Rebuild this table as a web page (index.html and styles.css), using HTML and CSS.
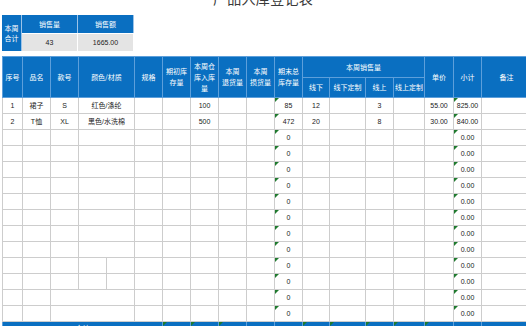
FILE: index.html
```html
<!DOCTYPE html>
<html lang="zh">
<head>
<meta charset="utf-8">
<title>产品入库登记表</title>
<link rel="stylesheet" href="styles.css">
</head>
<body>
<div class="page">
  <div class="title">产品入库登记表</div>
  <div class="summary">
    <div class="s-label">本周<br>合计</div>
    <div class="s-head">销售量</div>
    <div class="s-head">销售额</div>
    <div class="s-val">43</div>
    <div class="s-val">1665.00</div>
  </div>
  <table class="grid">
    <colgroup>
      <col style="width:20px"><col style="width:28px"><col style="width:28px"><col style="width:28px"><col style="width:28px"><col style="width:28px"><col style="width:28px"><col style="width:28px"><col style="width:28px"><col style="width:28px"><col style="width:28px"><col style="width:27px"><col style="width:36px"><col style="width:28px"><col style="width:31px"><col style="width:29px"><col style="width:28px"><col style="width:50px">
    </colgroup>
    <thead>
      <tr class="h1">
        <th rowspan="2">序号</th><th rowspan="2">品名</th><th rowspan="2">款号</th><th rowspan="2" colspan="2">颜色/材质</th><th rowspan="2">规格</th><th rowspan="2">期初库<br>存量</th><th rowspan="2">本周仓<br>库入库<br>量</th><th rowspan="2">本周<br>退货量</th><th rowspan="2">本周<br>损货量</th><th rowspan="2">期末总<br>库存量</th><th colspan="4">本周销售量</th><th rowspan="2">单价</th><th rowspan="2">小计</th><th rowspan="2">备注</th>
      </tr>
      <tr class="h2">
        <th>线下</th><th>线下定制</th><th>线上</th><th>线上定制</th>
      </tr>
    </thead>
    <tbody>
      <tr><td>1</td><td>裙子</td><td>S</td><td colspan="2">红色/涤纶</td><td></td><td></td><td>100</td><td></td><td></td><td class="tri">85</td><td>12</td><td></td><td>3</td><td></td><td>55.00</td><td class="tri">825.00</td><td></td></tr>
      <tr><td>2</td><td>T恤</td><td>XL</td><td colspan="2">黑色/水洗棉</td><td></td><td></td><td>500</td><td></td><td></td><td class="tri">472</td><td>20</td><td></td><td>8</td><td></td><td>30.00</td><td class="tri">840.00</td><td></td></tr>
      <tr><td></td><td></td><td></td><td colspan="2"></td><td></td><td></td><td></td><td></td><td></td><td class="tri">0</td><td></td><td></td><td></td><td></td><td></td><td class="tri">0.00</td><td></td></tr>
      <tr><td></td><td></td><td></td><td colspan="2"></td><td></td><td></td><td></td><td></td><td></td><td class="tri">0</td><td></td><td></td><td></td><td></td><td></td><td class="tri">0.00</td><td></td></tr>
      <tr><td></td><td></td><td></td><td colspan="2"></td><td></td><td></td><td></td><td></td><td></td><td class="tri">0</td><td></td><td></td><td></td><td></td><td></td><td class="tri">0.00</td><td></td></tr>
      <tr><td></td><td></td><td></td><td colspan="2"></td><td></td><td></td><td></td><td></td><td></td><td class="tri">0</td><td></td><td></td><td></td><td></td><td></td><td class="tri">0.00</td><td></td></tr>
      <tr><td></td><td></td><td></td><td colspan="2"></td><td></td><td></td><td></td><td></td><td></td><td class="tri">0</td><td></td><td></td><td></td><td></td><td></td><td class="tri">0.00</td><td></td></tr>
      <tr><td></td><td></td><td></td><td colspan="2"></td><td></td><td></td><td></td><td></td><td></td><td class="tri">0</td><td></td><td></td><td></td><td></td><td></td><td class="tri">0.00</td><td></td></tr>
      <tr><td></td><td></td><td></td><td colspan="2"></td><td></td><td></td><td></td><td></td><td></td><td class="tri">0</td><td></td><td></td><td></td><td></td><td></td><td class="tri">0.00</td><td></td></tr>
      <tr><td></td><td></td><td></td><td colspan="2"></td><td></td><td></td><td></td><td></td><td></td><td class="tri">0</td><td></td><td></td><td></td><td></td><td></td><td class="tri">0.00</td><td></td></tr>
      <tr><td></td><td></td><td></td><td></td><td></td><td></td><td></td><td></td><td></td><td></td><td class="tri">0</td><td></td><td></td><td></td><td></td><td></td><td class="tri">0.00</td><td></td></tr>
      <tr><td></td><td></td><td></td><td></td><td></td><td></td><td></td><td></td><td></td><td></td><td class="tri">0</td><td></td><td></td><td></td><td></td><td></td><td class="tri">0.00</td><td></td></tr>
      <tr><td></td><td></td><td colspan="3"></td><td></td><td></td><td></td><td></td><td></td><td class="tri">0</td><td></td><td></td><td></td><td></td><td></td><td class="tri">0.00</td><td></td></tr>
      <tr><td></td><td></td><td colspan="3"></td><td></td><td></td><td></td><td></td><td></td><td class="tri">0</td><td></td><td></td><td></td><td></td><td></td><td class="tri">0.00</td><td></td></tr>
    </tbody>
    <tfoot>
      <tr><td colspan="6">合计</td><td class="tri">0</td><td class="tri">600</td><td class="tri">0</td><td>0</td><td>557</td><td class="tri">32</td><td class="tri">0</td><td class="tri">11</td><td class="tri">0</td><td class="tri">85.00</td><td>1665.00</td><td></td></tr>
    </tfoot>
  </table>
</div>
</body>
</html>
```
FILE: styles.css
```css
html, body {
  margin: 0;
  padding: 0;
  background: #ffffff;
}
body {
  width: 526px;
  height: 326px;
  overflow: hidden;
  font-family: "Liberation Sans", "Noto Sans CJK SC", sans-serif;
  color: #222222;
}
.page {
  padding-left: 2px;
}
.title {
  margin-top: -9px;
  height: 15px;
  line-height: 15px;
  font-size: 14px;
  letter-spacing: 0.3px;
  text-align: center;
  color: #3a3a3a;
  font-family: "Noto Sans CJK SC", sans-serif;
  margin-left: -2px;
}
.summary {
  margin-top: 9px;
  display: grid;
  grid-template-columns: 20px 56px 56px;
  grid-template-rows: 18px 18px;
  width: 132px;
}
.summary > div {
  display: flex;
  align-items: center;
  justify-content: center;
  text-align: center;
  font-size: 7px;
  line-height: 10px;
  box-sizing: border-box;
}
.s-label {
  grid-row: 1 / 3;
  background: #0a6fc1;
  color: #ffffff;
  border-right: 1px solid #9cc3e8;
  font-family: "Noto Sans CJK SC", sans-serif;
}
.s-head {
  background: #0a6fc1;
  color: #ffffff;
  border-right: 1px solid #9cc3e8;
  font-family: "Noto Sans CJK SC", sans-serif;
}
.s-val {
  background: #e4e4e4;
  color: #222222;
  border-right: 1px solid #ffffff;
  border-top: 1px solid #ffffff;
}
.grid {
  margin-top: 5px;
  border-collapse: collapse;
  table-layout: fixed;
  width: 529px;
}
.grid th {
  background: #0a6fc1;
  color: #ffffff;
  font-weight: normal;
  font-size: 7px;
  line-height: 11px;
  padding: 0;
  border: 1px solid #5d9fdb;
  font-family: "Noto Sans CJK SC", sans-serif;
  text-align: center;
  vertical-align: middle;
}
.grid .h1 {
  height: 21px;
}
.grid .h2 {
  height: 20px;
}
.grid td {
  height: 15px;
  padding: 0;
  border: 1px solid #cdcdcd;
  font-size: 7px;
  line-height: 9px;
  text-align: center;
  vertical-align: middle;
  white-space: nowrap;
  overflow: hidden;
}
.grid td.tri {
  position: relative;
}
.grid td.tri::before {
  content: "";
  position: absolute;
  left: 0;
  top: 0;
  border-top: 4px solid #1f7a2e;
  border-right: 4px solid transparent;
}
.grid tfoot td {
  background: #0a6fc1;
  color: #ffffff;
  border-color: #5d9fdb;
  vertical-align: top;
  padding-top: 2px;
}
```
